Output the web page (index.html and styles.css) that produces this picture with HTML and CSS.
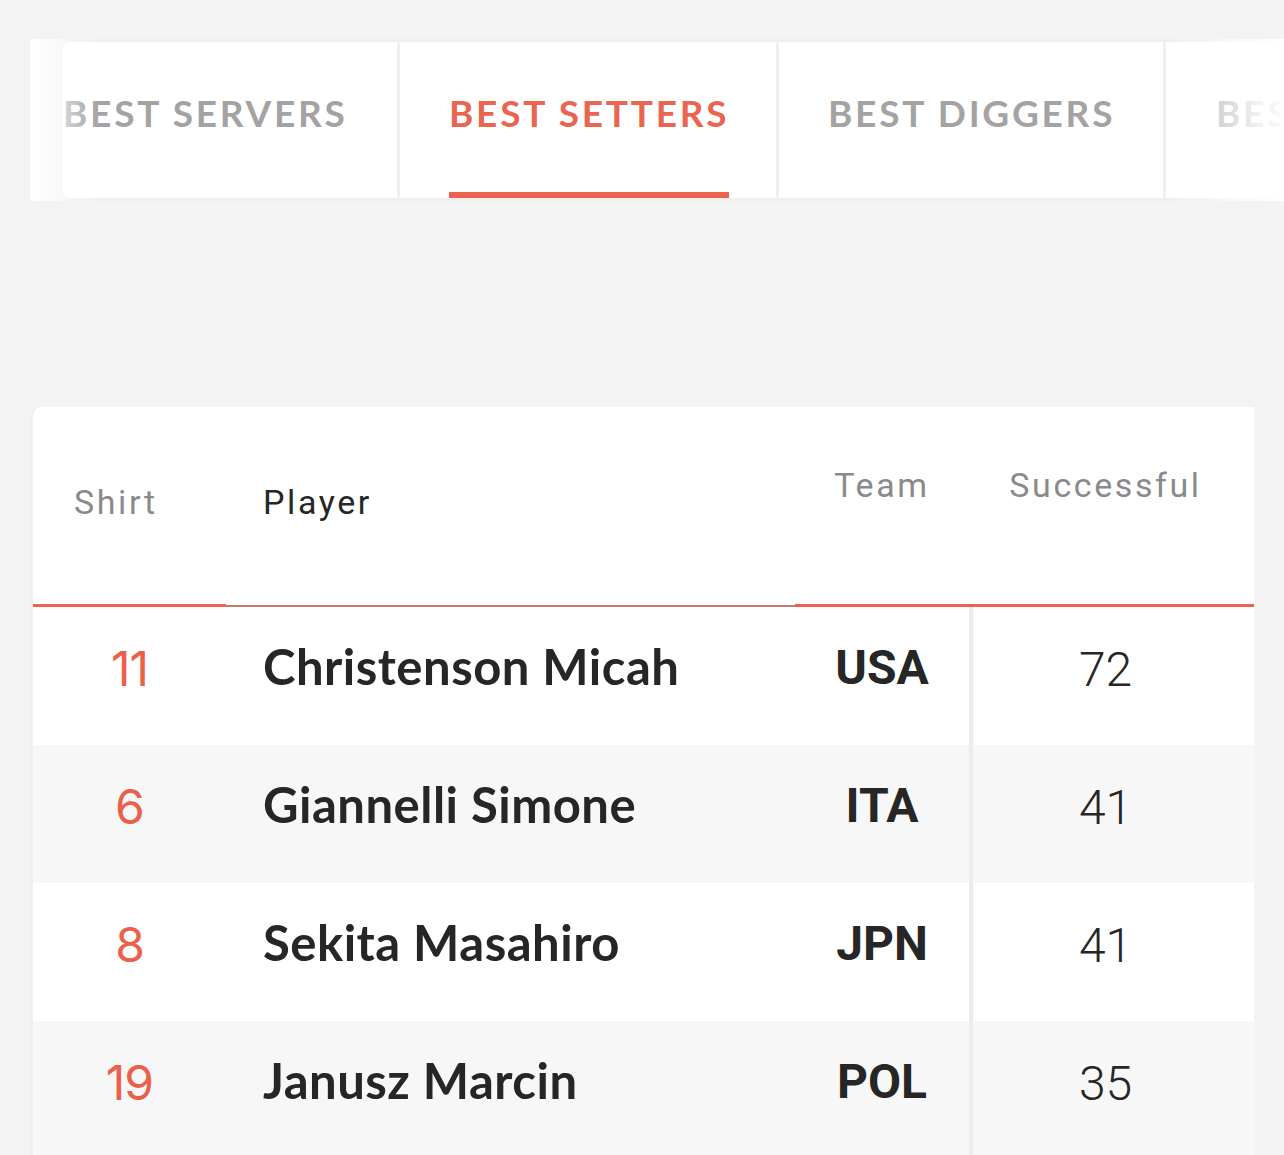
FILE: index.html
```html
<!DOCTYPE html>
<html lang="en">
<head>
<meta charset="utf-8">
<title>Best Setters</title>
<link rel="stylesheet" href="styles.css">
</head>
<body>
<div class="page">
  <div class="tabs-wrap">
    <div class="tabs-viewport">
      <div class="tabs">
        <div class="tab t1"><span class="label">BEST SERVERS</span></div>
        <div class="tab t2 active"><span class="label">BEST SETTERS</span></div>
        <div class="tab t3"><span class="label">BEST DIGGERS</span></div>
        <div class="tab t4"><span class="label">BEST RECEIVERS</span></div>
      </div>
    </div>
    <div class="fade fade-left"></div>
    <div class="fade fade-right"></div>
  </div>

  <div class="card">
    <div class="row head">
      <div class="cell c-shirt">Shirt</div>
      <div class="cell c-player">Player</div>
      <div class="cell c-team">Team</div>
      <div class="cell c-div"></div>
      <div class="cell c-succ">Successful</div>
    </div>
    <div class="row body">
      <div class="cell c-shirt">11</div>
      <div class="cell c-player">Christenson Micah</div>
      <div class="cell c-team">USA</div>
      <div class="cell c-div"></div>
      <div class="cell c-succ">72</div>
    </div>
    <div class="row body alt">
      <div class="cell c-shirt">6</div>
      <div class="cell c-player">Giannelli Simone</div>
      <div class="cell c-team">ITA</div>
      <div class="cell c-div"></div>
      <div class="cell c-succ">41</div>
    </div>
    <div class="row body">
      <div class="cell c-shirt">8</div>
      <div class="cell c-player">Sekita Masahiro</div>
      <div class="cell c-team">JPN</div>
      <div class="cell c-div"></div>
      <div class="cell c-succ">41</div>
    </div>
    <div class="row body alt">
      <div class="cell c-shirt">19</div>
      <div class="cell c-player">Janusz Marcin</div>
      <div class="cell c-team">POL</div>
      <div class="cell c-div"></div>
      <div class="cell c-succ">35</div>
    </div>
  </div>
</div>
</body>
</html>
```

FILE: styles.css
```css
* { box-sizing: border-box; }

html, body {
  margin: 0;
  padding: 0;
  background: #f3f3f3;
}

body {
  font-family: "Lato", "Liberation Sans", sans-serif;
  overflow: hidden;
}

.page {
  padding-top: 39px;
}

/* ---------- tabs ---------- */
.tabs-wrap {
  position: relative;
  margin-left: 30px;
  padding: 3px 4px 3px 33px;
  background: #efefef;
  overflow: hidden;
}

.tabs-viewport {
  border-radius: 8px;
  overflow: hidden;
}

.tabs {
  display: flex;
  gap: 3px;
  margin-left: -49px;
}

.tab {
  flex: none;
  height: 156px;
  background: #fff;
  display: flex;
  padding-left: 49px;
}

.t1 { width: 383px; }
.t2 { width: 376px; }
.t3 { width: 384px; }
.t4 { width: 420px; padding-left: 50px; }

.label {
  display: flex;
  align-items: center;
  padding-bottom: 10px;
  border-bottom: 6px solid transparent;
  font-family: "Lato", "Liberation Sans", sans-serif;
  font-weight: 700;
  font-size: 37px;
  letter-spacing: 2.75px;
  color: #a3a3a3;
  white-space: nowrap;
}

.active .label {
  color: #ea6450;
  border-bottom-color: #ec6450;
}

.fade {
  position: absolute;
  top: 0;
  bottom: 0;
  pointer-events: none;
}

.fade-left {
  left: 0;
  width: 70px;
  background: linear-gradient(to right,
    rgba(255,255,255,0.95) 0,
    rgba(255,255,255,0.85) 14px,
    rgba(255,255,255,0.55) 34px,
    rgba(255,255,255,0.25) 50px,
    rgba(255,255,255,0) 70px);
}

.fade-right {
  right: 0;
  width: 110px;
  background: linear-gradient(to right,
    rgba(255,255,255,0) 0,
    rgba(255,255,255,0.5) 42px,
    rgba(255,255,255,0.85) 85px,
    rgba(255,255,255,0.95) 110px);
}

/* ---------- table card ---------- */
.card {
  margin: 206px 30px 0 30px;
  background: #fff;
  border-left: 3px solid #efefef;
  border-top-left-radius: 10px;
  overflow: hidden;
}

.row {
  display: grid;
  grid-template-columns: 193px 569px 174px 4px 281px;
}

.cell {
  display: flex;
  align-items: center;
  white-space: nowrap;
}

/* header */
.head .cell {
  height: 200px;
  border-bottom: 3px solid #ec6450;
  padding-bottom: 7px;
  font-family: "Roboto", "Liberation Sans", sans-serif;
  font-weight: 400;
  font-size: 34px;
  letter-spacing: 2.6px;
  color: #8a8a8a;
}

.head .c-shirt { padding-left: 41px; }

.head .c-player {
  padding-left: 37px;
  color: #262626;
  border-bottom: 2px solid #c9776b;
  padding-bottom: 8px;
}

.head .c-team {
  justify-content: center;
  padding-bottom: 42px;
}

.head .c-succ {
  justify-content: center;
  padding-right: 16px;
  padding-bottom: 42px;
}

/* body rows */
.body { background: #fff; }
.body.alt { background: #f7f7f7; }

.body .cell {
  height: 138px;
  padding-bottom: 20px;
  font-size: 48px;
  color: #262626;
}

.body .c-shirt {
  justify-content: center;
  font-family: "Inter", "Lato", sans-serif;
  font-weight: 400;
  font-variant-numeric: proportional-nums;
  letter-spacing: -1px;
  color: #ea604b;
  padding-bottom: 16px;
}

.body .c-player {
  padding-left: 37px;
  font-family: "Lato", "Liberation Sans", sans-serif;
  font-weight: 700;
  font-size: 49px;
  letter-spacing: 0.5px;
}

.body .c-team {
  justify-content: center;
  font-family: "Roboto", "Liberation Sans", sans-serif;
  font-weight: 700;
  padding-bottom: 17px;
}

.body .c-div {
  background: #ececec;
  padding: 0;
}

.body .c-succ {
  justify-content: center;
  padding-right: 16px;
  padding-bottom: 14px;
  font-family: "Roboto", "Liberation Sans", sans-serif;
  font-weight: 300;
}
```
